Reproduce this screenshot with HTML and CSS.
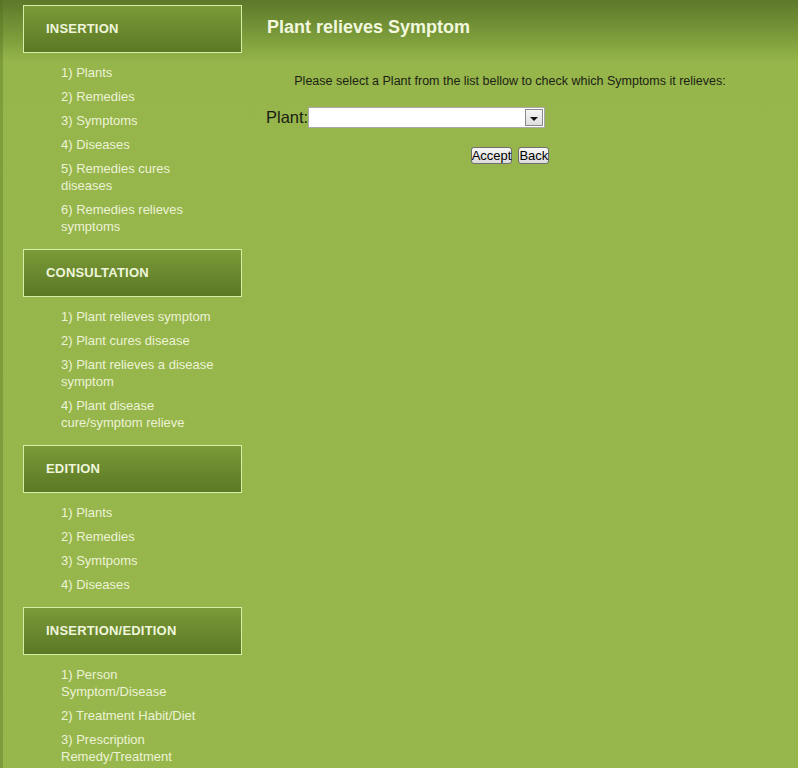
FILE: index.html
```html
<!DOCTYPE html>
<html>
<head>
<meta charset="utf-8">
<title>Plant relieves Symptom</title>
<link rel="stylesheet" href="styles.css">
</head>
<body>
<div class="page">
  <aside class="sidebar">
    <div class="box"><span>INSERTION</span></div>
    <ul class="menu">
      <li>1) Plants</li>
      <li>2) Remedies</li>
      <li>3) Symptoms</li>
      <li>4) Diseases</li>
      <li>5) Remedies cures diseases</li>
      <li>6) Remedies relieves symptoms</li>
    </ul>
    <div class="box"><span>CONSULTATION</span></div>
    <ul class="menu">
      <li>1) Plant relieves symptom</li>
      <li>2) Plant cures disease</li>
      <li>3) Plant relieves a disease symptom</li>
      <li>4) Plant disease cure/symptom relieve</li>
    </ul>
    <div class="box"><span>EDITION</span></div>
    <ul class="menu">
      <li>1) Plants</li>
      <li>2) Remedies</li>
      <li>3) Symtpoms</li>
      <li>4) Diseases</li>
    </ul>
    <div class="box"><span>INSERTION/EDITION</span></div>
    <ul class="menu">
      <li>1) Person Symptom/Disease</li>
      <li>2) Treatment Habit/Diet</li>
      <li>3) Prescription Remedy/Treatment</li>
    </ul>
  </aside>
  <main class="content">
    <h1 class="title">Plant relieves Symptom</h1>
    <p class="intro">Please select a Plant from the list bellow to check which Symptoms it relieves:</p>
    <div class="field">
      <label class="label">Plant:</label>
      <div class="select">
        <div class="select-value"></div>
        <div class="select-btn"><span class="arrow"></span></div>
      </div>
    </div>
    <div class="actions">
      <button class="btn">Accept</button>
      <button class="btn">Back</button>
    </div>
  </main>
</div>
</body>
</html>
```
FILE: styles.css
```css
html, body {
  margin: 0;
  padding: 0;
}
body {
  min-height: 768px;
  background: linear-gradient(#5d782a 0px, #7a9a3a 35px, #96b54b 62px, #97b64c 100%);
  font-family: "Liberation Sans", Arial, sans-serif;
}
.page {
  display: flex;
  min-height: 768px;
  border-left: 3px solid rgba(80, 110, 30, 0.35);
}
.sidebar {
  width: 219px;
  padding: 5px 16px 0 20px;
  flex: none;
}
.box {
  height: 46px;
  border: 1px solid #d6eea6;
  background: linear-gradient(#7b9a38, #5b7824);
  display: flex;
  align-items: center;
  padding-left: 22px;
  box-sizing: content-box;
  width: 195px;
}
.box span {
  color: #eff6dc;
  font-weight: bold;
  font-size: 13px;
  letter-spacing: 0.2px;
  margin-top: -1px;
}
.menu {
  list-style: none;
  margin: 0;
  padding: 11px 0 7px 38px;
  width: 158px;
}
.menu li {
  color: #ecf3d6;
  font-size: 13px;
  line-height: 17px;
  margin-bottom: 7px;
}
.content {
  width: 504px;
  flex: none;
}
.title {
  margin: 0;
  padding: 16px 0 0 9px;
  height: 41px;
  box-sizing: border-box;
  font-size: 18px;
  line-height: 23px;
  color: #f1f8de;
  font-weight: bold;
}
.intro {
  margin: 33px 0 0;
  text-align: center;
  font-size: 12.5px;
  line-height: 15px;
  color: #1c1f14;
}
.field {
  display: flex;
  align-items: center;
  margin-top: 18px;
  padding-left: 8px;
}
.label {
  font-size: 16.5px;
  color: #1a1c14;
  width: 42px;
}
.select {
  display: flex;
  width: 235px;
  height: 19px;
  border: 1px solid #a9a9a9;
  background: #fff;
}
.select-value {
  flex: 1;
}
.select-btn {
  width: 18px;
  height: 17px;
  margin: 1px 1px 1px 0;
  background: linear-gradient(#f5f5f5, #dedede);
  border: 1px solid #8a8a8a;
  box-sizing: border-box;
  display: flex;
  align-items: center;
  justify-content: center;
}
.arrow {
  width: 0;
  height: 0;
  border-left: 4px solid transparent;
  border-right: 4px solid transparent;
  border-top: 4px solid #111;
  margin-top: 2px;
}
.actions {
  display: flex;
  justify-content: center;
  gap: 6px;
  margin-top: 19px;
}
.btn {
  font-family: "Liberation Sans", Arial, sans-serif;
  font-size: 13px;
  line-height: 15px;
  padding: 0;
  margin: 0;
  color: #000;
  background: linear-gradient(#f7f7f7, #dcdcdc);
  border: 1px solid #707070;
  border-radius: 3px;
}
```
